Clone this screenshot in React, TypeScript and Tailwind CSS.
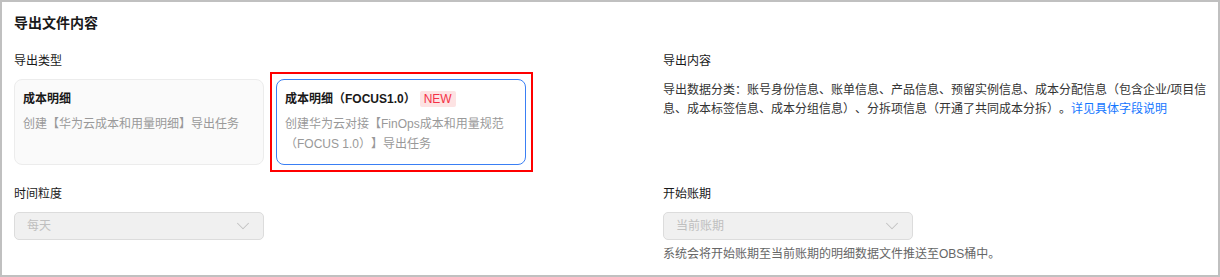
import { ChevronDown } from 'lucide-react';

const font = 'font-["Liberation_Sans","Noto_Sans_CJK_SC",sans-serif]';

function DisabledSelect({ value }: { value: string }) {
  return (
    <div className="flex h-[28px] w-[250px] items-center justify-between rounded-[5px] border border-[#dcdcdc] bg-[#f0f0f0] pl-3 pr-[9px]">
      <span className="text-xs text-[#bfbfbf]">{value}</span>
      <ChevronDown size={22} strokeWidth={1.1} className="text-[#c2c2c2]" />
    </div>
  );
}

export default function App() {
  return (
    <div className={`h-[277px] w-[1220px] border-2 border-[#c0c0c0] bg-white pl-3 pr-[10px] pt-[11px] text-[#191919] [text-spacing-trim:space-all] ${font}`}>
      <h2 className="text-[14px] font-bold leading-5">导出文件内容</h2>

      <div className="mt-[18px] grid grid-cols-[649px_1fr]">
        <div>
          <div className="text-xs leading-5">导出类型</div>
          <div className="mt-2 flex gap-3">
            <div className="h-[86px] w-[250px] rounded-lg border border-[#ececec] bg-[#fafafa] px-[8px] pt-[9px]">
              <div className="text-xs font-bold leading-5">成本明细</div>
              <p className="mt-[5px] text-xs leading-5 text-[#999]">创建【华为云成本和用量明细】导出任务</p>
            </div>
            <div className="relative h-[86px] w-[250px] rounded-lg border border-[#3a7ff4] bg-white px-[8px] pt-[9px]">
              <div className="flex items-center text-xs leading-5">
                <span className="font-bold">成本明细（FOCUS1.0）</span>
                <span className="ml-1 rounded-[2px] bg-[#fde3e3] px-1 text-xs leading-4 text-[#f43146]">NEW</span>
              </div>
              <p className="mt-[5px] text-xs leading-5 text-[#999]">
                创建华为云对接【FinOps成本和用量规范
                <br />
                （FOCUS 1.0）】导出任务
              </p>
              <span className="pointer-events-none absolute -bottom-[8px] -left-[7px] -right-[8px] -top-[8px] border-2 border-[#ff0000]" />
            </div>
          </div>
        </div>

        <div>
          <div className="text-xs leading-5">导出内容</div>
          <p className="mt-[10px] text-xs leading-[19px] text-[#333]">
            导出数据分类：账号身份信息、账单信息、产品信息、预留实例信息、成本分配信息（包含企业/项目信息、成本标签信息、成本分组信息）、分拆项信息（开通了共同成本分拆）。
            <a className="text-[#1476ff]" href="#">
              详见具体字段说明
            </a>
          </p>
        </div>
      </div>

      <div className="mt-[19px] grid grid-cols-[649px_1fr]">
        <div>
          <div className="text-xs leading-5">时间粒度</div>
          <div className="mt-2">
            <DisabledSelect value="每天" />
          </div>
        </div>
        <div>
          <div className="text-xs leading-5">开始账期</div>
          <div className="mt-2">
            <DisabledSelect value="当前账期" />
          </div>
          <p className="mt-1 text-xs leading-5 text-[#666]">系统会将开始账期至当前账期的明细数据文件推送至OBS桶中。</p>
        </div>
      </div>
    </div>
  );
}
